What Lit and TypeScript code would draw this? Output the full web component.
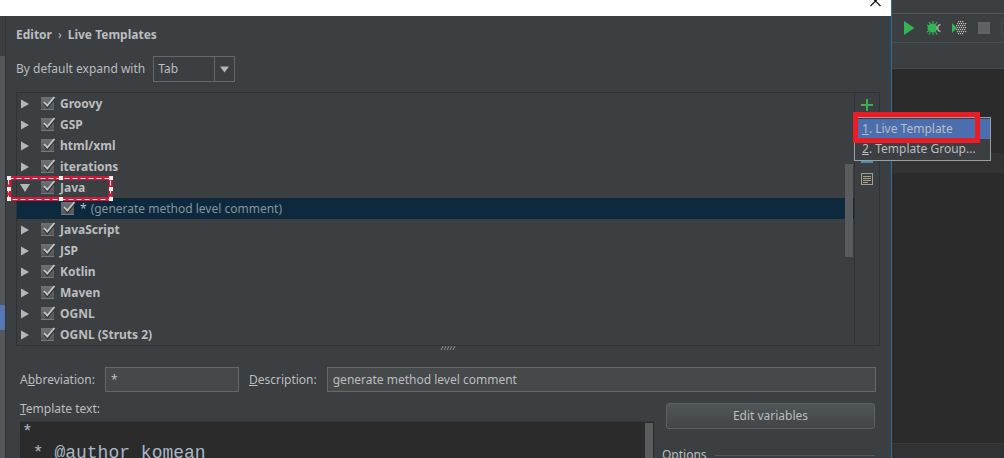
import { LitElement, html, css, svg } from "lit";
import { customElement, property, state } from "lit/decorators.js";
import { classMap } from "lit/directives/class-map.js";

interface Group {
  name: string;
  open?: boolean;
  templates?: { key: string; description: string }[];
}

const GROUPS: Group[] = [
  { name: "Groovy" },
  { name: "GSP" },
  { name: "html/xml" },
  { name: "iterations" },
  { name: "Java", open: true, templates: [{ key: "*", description: "generate method level comment" }] },
  { name: "JavaScript" },
  { name: "JSP" },
  { name: "Kotlin" },
  { name: "Maven" },
  { name: "OGNL" },
  { name: "OGNL (Struts 2)" },
];

@customElement("tick-box")
class TickBox extends LitElement {
  @property() label = "";

  static styles = css`
    :host {
      display: block;
      flex: none;
    }
    .box {
      display: grid;
      width: 15px;
      height: 15px;
    }
    .input,
    .mark {
      grid-area: 1 / 1;
    }
    .input {
      appearance: none;
      width: 13px;
      height: 13px;
      margin: 1px 0 0;
      background: linear-gradient(#6e7173, #54585a);
      border-bottom: 1px solid #777a7c;
    }
    .mark {
      pointer-events: none;
      fill: none;
    }
    .input:not(:checked) + .mark {
      visibility: hidden;
    }
  `;

  render() {
    return html`<span class="box">
      <input class="input" type="checkbox" checked aria-label=${this.label} />
      <svg class="mark" width="15" height="15" viewBox="0 0 15 15">
        <path d="M3.5 7.5L6.5 11L13.5 2.5" stroke="#2f3133" stroke-width="2.4" />
        <path d="M3 6L6.3 9.6L13.5 1" stroke="#c4c6c7" stroke-width="1.8" />
      </svg>
    </span>`;
  }
}

@customElement("template-tree")
class TemplateTree extends LitElement {
  @state() private groups = GROUPS;

  static styles = css`
    :host {
      display: block;
    }
    .row {
      display: flex;
      align-items: center;
      height: 21px;
      padding-left: 3px;
      font-weight: 700;
    }
    .child {
      padding-left: 44px;
      font-weight: 400;
      background: #0d293e;
    }
    .toggle {
      display: flex;
      width: 21px;
      padding: 0;
      border: 0;
      background: none;
    }
    .arrow {
      fill: #b4b6b8;
    }
    .name {
      margin-left: 4px;
    }
    .description {
      margin-left: 4px;
      color: #87939a;
    }
    .marked {
      position: relative;
    }
    .selection {
      position: absolute;
      left: -11px;
      top: -3px;
      pointer-events: none;
    }
  `;

  private toggle(group: Group) {
    this.groups = this.groups.map((g) => (g === group ? { ...g, open: !g.open } : g));
  }

  private selection() {
    const handles = [2, 54, 104].flatMap((x) => [3, 14, 24].map((y) => [x, y])).filter(([x, y]) => !(x === 54 && y === 14));
    return html`<svg class="selection" width="108" height="28" viewBox="0 0 108 28">
      <rect x="3.5" y="4" width="101" height="21" fill="none" stroke="#d0183a" stroke-width="4" />
      <rect x="2.5" y="4.5" width="102" height="21" fill="none" stroke="#f4e4e6" stroke-dasharray="5 3" />
      ${handles.map(([x, y]) => svg`<rect x=${x - 1} y=${y - 1} width="4" height="4" fill="#f1eee4" />`)}
    </svg>`;
  }

  render() {
    return this.groups.map(
      (group) => html`
        <div class=${classMap({ row: true, marked: !!group.templates })}>
          <button class="toggle" aria-label=${`Toggle ${group.name}`} @click=${() => this.toggle(group)}>
            <svg class="arrow" width="10" height="10" viewBox="0 0 10 10">
              <path d=${group.open ? "M0 1H10L5 9Z" : "M1 0.5V9.5L9 5Z"} />
            </svg>
          </button>
          <tick-box label=${group.name}></tick-box>
          <span class="name">${group.name}</span>
          ${group.templates ? this.selection() : null}
        </div>
        ${group.open
          ? group.templates?.map(
              (t) => html`<div class="row child">
                <tick-box label=${t.description}></tick-box>
                <span class="name">${t.key}</span>
                <span class="description">(${t.description})</span>
              </div>`
            )
          : null}
      `
    );
  }
}

@customElement("ide-backdrop")
class IdeBackdrop extends LitElement {
  static styles = css`
    :host {
      display: flex;
      flex-direction: column;
      background: #2b2b2b;
    }
    .menu {
      height: 13px;
      background: #3c3f41;
      border-bottom: 1px solid #55585a;
    }
    .tools {
      display: flex;
      align-items: center;
      gap: 9px;
      height: 28px;
      padding-left: 9px;
      background: #3c3f41;
      border-bottom: 1px solid #4a4d4f;
      overflow: hidden;
    }
    .tool {
      display: flex;
      padding: 0;
      border: 0;
      background: none;
    }
    .crumbs {
      height: 25px;
      background: #3c3f41;
      border-bottom: 1px solid #48494a;
    }
    .editor {
      flex: 1;
      display: flex;
      flex-direction: column;
      justify-content: space-between;
      padding-top: 84px;
    }
    .caret-line {
      height: 20px;
      background: #323232;
    }
    .status {
      height: 14px;
      background: #313233;
      border-top: 1px solid #3b3b3b;
    }
  `;

  render() {
    const dots = [];
    for (let y = 0; y < 7; y++)
      for (let x = 0; x < 5; x++) {
        const px = 5 + x * 2 + (y % 2);
        const py = 1 + y * 2;
        if (Math.hypot(px - 9, py - 7) < 6.5) dots.push([px, py]);
      }
    return html`
      <div class="menu"></div>
      <div class="tools">
        <button class="tool" aria-label="Run">
          <svg width="16" height="16" viewBox="0 0 16 16"><path d="M3 1L13.5 8L3 15Z" fill="#2fb457" /></svg>
        </button>
        <button class="tool" aria-label="Debug">
          <svg width="16" height="16" viewBox="0 0 16 16">
            <path d="M3 2L5 5M7 1V4M11 2L9 5M1 5L4 7M1 12L4 10M3 14.5L5 11M7 15V12M11 14.5L9 11" stroke="#36ad58" stroke-width="1.3" />
            <ellipse cx="6.5" cy="8" rx="5" ry="4.2" fill="#2fb457" />
            <path d="M14.5 4.5C11 5 10.5 11 14.5 11.5M12 8H10" fill="none" stroke="#b29b9b" stroke-width="1.4" />
          </svg>
        </button>
        <button class="tool" aria-label="Run with coverage">
          <svg width="16" height="16" viewBox="0 0 16 16">
            ${dots.map(([x, y]) => svg`<rect x=${x} y=${y} width="1.2" height="1.2" fill="#c3bcb6" />`)}
            <path d="M1 3L6 8L1 13Z" fill="#2fb457" />
          </svg>
        </button>
        <button class="tool" aria-label="Stop">
          <svg width="16" height="16" viewBox="0 0 16 16"><rect x="2" y="2" width="12" height="12" fill="#606264" /></svg>
        </button>
        <svg width="4" height="26" viewBox="0 0 4 26"><path d="M1 0V26" stroke="#67696b" stroke-dasharray="1 2" /></svg>
      </div>
      <div class="crumbs"></div>
      <div class="editor">
        <div class="caret-line"></div>
        <div class="status"></div>
      </div>
    `;
  }
}

@customElement("app-root")
class AppRoot extends LitElement {
  static styles = css`
    * {
      box-sizing: border-box;
    }
    :host {
      display: grid;
      grid-template-columns: 6px 1fr 112px;
      grid-template-rows: 16px 1fr;
      height: 100vh;
      overflow: hidden;
      background: #3c3f41;
      color: #bbbdbf;
      font: 12px/18px "Noto Sans", "Open Sans", sans-serif;
    }
    input,
    select,
    button,
    textarea {
      font: inherit;
      color: inherit;
      margin: 0;
    }
    .titlebar {
      grid-area: 1 / 1 / 2 / 3;
      display: flex;
      justify-content: flex-end;
      background: #fff;
      border-right: 1px solid #2f6f9f;
    }
    .close {
      display: flex;
      height: 7px;
      padding: 0 10px 0 0;
      border: 0;
      background: none;
    }
    .gutter {
      grid-area: 2 / 1;
      border-right: 1px solid #333638;
      background: linear-gradient(#3c3f41 40px, #55585a 40px 289px, #5676b4 289px 314px, #55585a 314px);
    }
    .dialog {
      grid-area: 2 / 2;
      position: relative;
      z-index: 1;
      min-width: 0;
      min-height: 0;
      padding: 10px 11px 0 10px;
      border-right: 1px solid #2f6f9f;
      display: flex;
      flex-direction: column;
    }
    .backdrop {
      grid-area: 1 / 3 / 3 / 4;
      min-height: 0;
    }
    .title {
      display: flex;
      gap: 6px;
      margin: 0;
      font-size: 12px;
      font-weight: 700;
    }
    .chevron {
      font-weight: 400;
    }
    .expand {
      display: flex;
      align-items: center;
      gap: 8px;
      margin-top: 12px;
    }
    .combo {
      display: grid;
      grid-template-columns: 1fr 20px;
      width: 82px;
      height: 26px;
      border: 1px solid #65686a;
    }
    .select {
      grid-area: 1 / 1 / 2 / 3;
      appearance: none;
      padding: 0 4px;
      border: 0;
      background: none;
    }
    .drop {
      grid-area: 1 / 2;
      display: grid;
      place-items: center;
      border-left: 1px solid #65686a;
      pointer-events: none;
    }
    .panel {
      display: flex;
      margin-top: 10px;
      border: 1px solid #303234;
    }
    .tree {
      flex: 1;
    }
    .scroll {
      width: 8px;
      height: 93px;
      margin-top: 71px;
      background: #595b5d;
    }
    .list {
      flex: 1;
      display: grid;
      grid-template-columns: 1fr 9px;
      border-right: 1px solid #303234;
    }
    .list .tree {
      grid-area: 1 / 1 / 2 / 3;
    }
    .list .scroll {
      grid-area: 1 / 2;
    }
    .side {
      position: relative;
      width: 24px;
      display: flex;
      flex-direction: column;
      align-items: center;
      gap: 8px;
      padding-top: 5px;
    }
    .icon {
      display: flex;
      padding: 0;
      border: 0;
      background: none;
    }
    .popup {
      position: absolute;
      z-index: 2;
      left: -1px;
      top: 24px;
      width: 137px;
      padding: 1px 0;
      background: #3c3f41;
      border: 1px solid #9b9d9e;
      white-space: nowrap;
    }
    .item {
      display: block;
      width: 100%;
      height: 20px;
      padding: 0 7px;
      border: 0;
      background: none;
      text-align: left;
      line-height: 20px;
    }
    .current {
      background: #4b6eaf;
    }
    .highlight {
      position: absolute;
      left: -2px;
      top: -6px;
      width: 127px;
      height: 31px;
      border: 5px solid #ec1c24;
      pointer-events: none;
    }
    .grip {
      align-self: center;
      flex: none;
    }
    .fields {
      display: flex;
      align-items: center;
      gap: 10px;
      margin: 17px 4px 0;
    }
    .text {
      height: 25px;
      padding: 0 5px;
      border: 1px solid #656869;
      background: #45494a;
    }
    .abbr {
      width: 134px;
    }
    .desc {
      flex: 1;
      min-width: 0;
    }
    .lower {
      flex: 1;
      min-height: 0;
      display: flex;
      gap: 12px;
      margin: 8px 5px 0 4px;
    }
    .template {
      flex: 1;
      display: flex;
      flex-direction: column;
    }
    .code-wrap {
      flex: 1;
      min-height: 0;
      display: flex;
      gap: 1px;
      margin-top: 3px;
      background: #2b2b2b;
      border-top: 1px solid #343637;
    }
    .code {
      flex: 1;
      resize: none;
      overflow: hidden;
      padding: 0 2px;
      border: 0;
      background: none;
      font: 18px/21px "Liberation Mono", monospace;
      color: #a9b7c6;
    }
    .code-scroll {
      width: 8px;
      margin: 1px 1px 0 0;
      background: #5a5c5e;
    }
    .options {
      width: 209px;
      margin-top: 3px;
    }
    .edit {
      width: 100%;
      height: 26px;
      border: 1px solid #5e6264;
      border-radius: 3px;
      background: linear-gradient(#505557, #414547);
    }
    .group {
      display: flex;
      align-items: center;
      gap: 8px;
      margin: 17px 0 0 -4px;
    }
    .group::after {
      content: "";
      flex: 1;
      border-top: 1px solid #55585a;
    }
  `;

  render() {
    return html`
      <header class="titlebar">
        <button class="close" aria-label="Close">
          <svg width="11" height="7" viewBox="0 0 11 7">
            <path d="M0.5 -4L10.5 6M10.5 -4L0.5 6" stroke="#111" stroke-width="1.2" />
          </svg>
        </button>
      </header>
      <div class="gutter"></div>
      <main class="dialog">
        <h1 class="title"><span>Editor</span><span class="chevron">›</span><span>Live Templates</span></h1>
        <div class="expand">
          <label for="expand">By default expand with</label>
          <div class="combo">
            <select class="select" id="expand">
              <option>Tab</option>
            </select>
            <span class="drop">
              <svg width="9" height="7" viewBox="0 0 9 7"><path d="M0 0.5H9L4.5 6.5Z" fill="#b4b6b8" /></svg>
            </span>
          </div>
        </div>
        <section class="panel">
          <div class="list">
            <template-tree class="tree"></template-tree>
            <div class="scroll"></div>
          </div>
          <div class="side">
            <button class="icon" aria-label="Add">
              <svg width="14" height="14" viewBox="0 0 14 14"><path d="M7 1V13M1 7H13" stroke="#3fae4f" stroke-width="2" /></svg>
            </button>
            <button class="icon" aria-label="Remove">
              <svg width="14" height="14" viewBox="0 0 14 14"><path d="M1 7H13" stroke="#aeb0b2" stroke-width="2" /></svg>
            </button>
            <button class="icon" aria-label="Copy">
              <svg width="14" height="22" viewBox="0 0 14 22"><path d="M1 9H13V21H1Z" fill="#4a8fae" /></svg>
            </button>
            <button class="icon" aria-label="Restore defaults">
              <svg width="14" height="14" viewBox="0 0 14 14">
                <rect x="1.5" y="1.5" width="11" height="11" fill="none" stroke="#a59f8c" />
                <path d="M3 4.5H11M3 6.5H11M3 8.5H11M3 10.5H8" stroke="#a59f8c" />
              </svg>
            </button>
            <div class="popup" role="menu">
              <button class="item current" role="menuitem"><u>1</u>. Live Template</button>
              <button class="item" role="menuitem"><u>2</u>. Template Group...</button>
              <div class="highlight"></div>
            </div>
          </div>
        </section>
        <svg class="grip" width="16" height="4" viewBox="0 0 16 4">
          <path d="M1 4L3 0M4 4L6 0M7 4L9 0M10 4L12 0M13 4L15 0" stroke="#8b8d8f" />
        </svg>
        <div class="fields">
          <label for="abbr">A<u>b</u>breviation:</label>
          <input class="text abbr" id="abbr" value="*" />
          <label for="desc"><u>D</u>escription:</label>
          <input class="text desc" id="desc" value="generate method level comment" />
        </div>
        <div class="lower">
          <div class="template">
            <label for="code"><u>T</u>emplate text:</label>
            <div class="code-wrap">
              <textarea class="code" id="code" spellcheck="false" .value=${"*\n * @author komean"}></textarea>
              <div class="code-scroll"></div>
            </div>
          </div>
          <div class="options">
            <button class="edit">Edit variables</button>
            <div class="group">Options</div>
          </div>
        </div>
      </main>
      <ide-backdrop class="backdrop"></ide-backdrop>
    `;
  }
}
